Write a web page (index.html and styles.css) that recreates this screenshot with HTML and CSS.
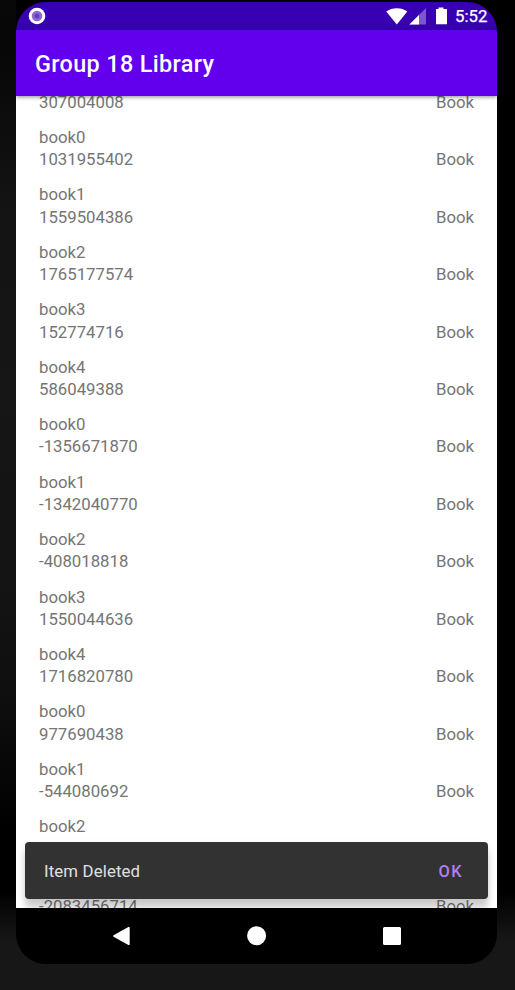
FILE: index.html
```html
<!DOCTYPE html>
<html lang="en">
<head>
<meta charset="utf-8">
<title>Group 18 Library</title>
<link rel="stylesheet" href="styles.css">
</head>
<body>
<div class="device">
  <div class="screen">
    <header class="status">
      <svg class="status-dot" width="18" height="18" viewBox="0 0 18 18"><circle cx="9" cy="9" r="8.3" fill="#fff"/><circle cx="9" cy="9" r="5.3" fill="#8d6bd3"/><circle cx="9" cy="9" r="2.5" fill="#673fc0"/></svg>
      <svg class="status-icons" width="62" height="20" viewBox="0 0 62 20">
        <path d="M0.2 5.6C6 1.1 15.8 1.1 21.3 5.6L10.8 18.4Z" fill="#fff"/>
        <path d="M40 2V18.6H23.4Z" fill="#7d57cb"/><path d="M33 9V18.6H23.4Z" fill="#fff"/>
        <path d="M50 3h2.5V1.4h5V3H61v15.2H50Z" fill="#fff"/>
      </svg>
      <span class="clock">5:52</span>
    </header>
    <div class="appbar"><h1>Group 18 Library</h1></div>
    <main class="content">
      <ul class="list">
        <li><span class="name"></span><span class="id">307004008</span><span class="kind">Book</span></li>
        <li><span class="name">book0</span><span class="id">1031955402</span><span class="kind">Book</span></li>
        <li><span class="name">book1</span><span class="id">1559504386</span><span class="kind">Book</span></li>
        <li><span class="name">book2</span><span class="id">1765177574</span><span class="kind">Book</span></li>
        <li><span class="name">book3</span><span class="id">152774716</span><span class="kind">Book</span></li>
        <li><span class="name">book4</span><span class="id">586049388</span><span class="kind">Book</span></li>
        <li><span class="name">book0</span><span class="id">-1356671870</span><span class="kind">Book</span></li>
        <li><span class="name">book1</span><span class="id">-1342040770</span><span class="kind">Book</span></li>
        <li><span class="name">book2</span><span class="id">-408018818</span><span class="kind">Book</span></li>
        <li><span class="name">book3</span><span class="id">1550044636</span><span class="kind">Book</span></li>
        <li><span class="name">book4</span><span class="id">1716820780</span><span class="kind">Book</span></li>
        <li><span class="name">book0</span><span class="id">977690438</span><span class="kind">Book</span></li>
        <li><span class="name">book1</span><span class="id">-544080692</span><span class="kind">Book</span></li>
        <li><span class="name">book2</span><span class="id"></span><span class="kind"></span></li>
        <li><span class="name"></span><span class="id">-2083456714</span><span class="kind">Book</span></li>
      </ul>
      <div class="snackbar"><span>Item Deleted</span><span class="action">OK</span></div>
    </main>
    <nav class="navbar">
      <svg width="20" height="20" viewBox="0 0 20 20"><path d="M17.8 1.8V18.2L3 10Z" fill="#fff" stroke="#fff" stroke-width="1.8" stroke-linejoin="round"/></svg>
      <svg width="20" height="20" viewBox="0 0 20 20"><circle cx="9.6" cy="9.7" r="9.5" fill="#fff"/></svg>
      <svg width="20" height="20" viewBox="0 0 20 20"><rect x="1" y="1" width="18" height="18" rx="1.5" fill="#fff"/></svg>
    </nav>
  </div>
</div>
</body>
</html>
```
FILE: styles.css
```css
* { box-sizing: border-box; }
body { margin: 0; background: #000; font-family: Roboto, sans-serif; }
.device {
  width: 515px; height: 990px; padding: 2px 18px 26px 16px; overflow: hidden;
  background:
    linear-gradient(#080808, #070707 5%, #141414 22%, #161616 40%, #131313 60%, #0f0f0f 70%, #000 84%, #000 90%, #171717 95%) 0 0 / 16px 100% no-repeat,
    linear-gradient(#000 90%, #171717 95%);
}
.screen {
  width: 481px; height: 962px; display: flex; flex-direction: column;
  border-radius: 30px; overflow: hidden; background: #000;
}
.status {
  height: 28px; flex: none; background: #3700b3; color: #fff;
  display: flex; align-items: center; padding: 0 9px 0 12px;
}
.status-icons { margin-left: auto; }
.clock { width: 33px; margin-left: 7px; font-size: 16.8px; font-weight: 400; line-height: 28px; -webkit-text-stroke: .25px #fff; }
.appbar {
  height: 66px; flex: none; background: #6200ee; color: #fff; padding: 2px 0 0 19px;
  display: flex; align-items: center; z-index: 1; box-shadow: 0 1px 4px rgba(0,0,0,.45);
}
h1 { margin: 0; font-size: 23.4px; font-weight: 500; line-height: 28px; letter-spacing: .35px; }
.content { height: 812px; flex: none; background: #fff; position: relative; overflow: hidden; }
.list { list-style: none; margin: -27.4px 0 0; padding: 0; color: #757575; font-size: 16.75px; line-height: 22.2px; }
.list li {
  height: 57.45px; padding: 0 23px; display: grid;
  grid-template: 22.2px 22.2px / 1fr auto;
}
.name { grid-column: 1 / -1; }
.snackbar {
  position: absolute; left: 9px; right: 9px; bottom: 9.5px; height: 56.5px; padding: 1px 25px 0 19px;
  display: flex; align-items: center; justify-content: space-between;
  background: #323232; color: #e0e0e0; border-radius: 4px; font-size: 16.75px; letter-spacing: .15px;
  box-shadow: 0 9px 6px rgba(0,0,0,.16), 0 4px 10px rgba(0,0,0,.08);
}
.action { padding-top: 1px; color: #b17ff6; font-size: 16.4px; font-weight: 500; letter-spacing: 1.4px; }
.navbar { height: 56px; flex: none; display: flex; justify-content: center; align-items: center; gap: 115.5px; }
```
